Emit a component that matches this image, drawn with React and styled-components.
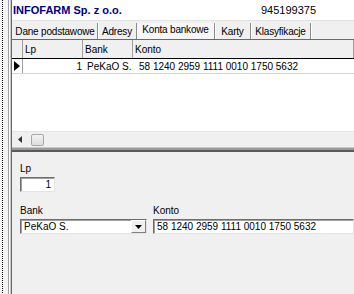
import styled, { createGlobalStyle } from 'styled-components';

const Global = createGlobalStyle`
    html, body { margin: 0; padding: 0; }
    body {
        background: #f0f0f0;
        font-family: "Liberation Sans", Arial, sans-serif;
        font-size: 10px;
        color: #000;
    }
`

const tabs = [
    { label: 'Dane podstawowe', width: 85 },
    { label: 'Adresy', width: 39 },
    { label: 'Konta bankowe', width: 78, active: true },
    { label: 'Karty', width: 36 },
    { label: 'Klasyfikacje', width: 60 },
]

export default function App() {
    return (
        <>
            <Global />
            <Window>
                <Gutter />
                <FrameEdge />
                <Main>
                    <Header>
                        <Title>INFOFARM Sp. z o.o.</Title>
                        <span>945199375</span>
                    </Header>
                    <TabStrip>
                        {tabs.map(t => (
                            <Tab key={t.label} $w={t.width} $active={t.active}>{t.label}</Tab>
                        ))}
                    </TabStrip>
                    <Grid>
                        <HeadRow>
                            <IndicatorCell />
                            <HeadCell $w={57}>Lp</HeadCell>
                            <HeadCell $w={47}>Bank</HeadCell>
                            <HeadCell $grow>Konto</HeadCell>
                        </HeadRow>
                        <DataRow>
                            <IndicatorCell>
                                <svg width="6" height="10" viewBox="0 0 6 10">
                                    <path d="M0 0 L6 5 L0 10 Z" fill="#000" />
                                </svg>
                            </IndicatorCell>
                            <Cell $w={57} $right>1</Cell>
                            <Cell $w={47}>PeKaO S.</Cell>
                            <Cell $grow>58 1240 2959 1111 0010 1750 5632</Cell>
                        </DataRow>
                        <GridFill />
                        <HScroll>
                            <svg width="4" height="7" viewBox="0 0 4 7">
                                <path d="M4 0 L0 3.5 L4 7 Z" fill="#333" />
                            </svg>
                            <Thumb />
                        </HScroll>
                    </Grid>
                    <Splitter />
                    <Panel>
                        <Field>
                            <Label>Lp</Label>
                            <Edit $w={35} $right>1</Edit>
                        </Field>
                        <FieldRow>
                            <Field>
                                <Label>Bank</Label>
                                <Combo>
                                    <ComboText>PeKaO S.</ComboText>
                                    <DropButton>
                                        <svg width="7" height="4" viewBox="0 0 7 4">
                                            <path d="M0 0 L7 0 L3.5 4 Z" fill="#000" />
                                        </svg>
                                    </DropButton>
                                </Combo>
                            </Field>
                            <Field $grow>
                                <Label>Konto</Label>
                                <Edit>58 1240 2959 1111 0010 1750 5632</Edit>
                            </Field>
                        </FieldRow>
                    </Panel>
                </Main>
            </Window>
        </>
    )
}

const Window = styled.div`
    display: flex;
    height: 294px;
    width: 354px;
    overflow: hidden;
`

const Gutter = styled.div`
    width: 8px;
    flex: none;
    background: #f4f4f4;
    background-image: linear-gradient(#000 50%, transparent 50%);
    background-size: 1px 2px;
    background-repeat: repeat-y;
    background-position: 2px 0;
`

const FrameEdge = styled.div`
    width: 1px;
    flex: none;
    border-left: 1px solid #a0a0a0;
    border-right: 1px solid #c8c8c8;
    background: #fff;
`

const Main = styled.div`
    flex: 1;
    min-width: 0;
    display: flex;
    flex-direction: column;
    border-left: 1px solid #696969;
`

const Header = styled.div`
    height: 20px;
    flex: none;
    background: #fff;
    border-bottom: 1px solid #e4e4e4;
    display: grid;
    grid-template-columns: 249px 1fr;
    align-items: center;
    font-size: 11px;
    white-space: nowrap;
`

const Title = styled.span`
    font-weight: bold;
    color: #000080;
    padding-left: 1px;
`

const TabStrip = styled.div`
    height: 18px;
    flex: none;
    display: flex;
    align-items: stretch;
    padding-left: 1px;
    background: #f0f0f0;
    white-space: nowrap;
`

const Tab = styled.div`
    width: ${p => p.$w}px;
    flex: none;
    display: flex;
    align-items: center;
    justify-content: center;
    box-sizing: border-box;
    margin-top: 2px;
    padding-bottom: ${p => (p.$active ? 4 : 0)}px;
    border-right: 1px solid #8c8c8c;
    box-shadow: 1px 0 0 #fff;
    letter-spacing: -0.2px;
    background: ${p => (p.$active ? '#f7f7f7' : 'transparent')};
`

const Grid = styled.div`
    height: 107px;
    flex: none;
    display: flex;
    flex-direction: column;
    background: #fff;
    border-top: 1px solid #696969;
`

const HeadRow = styled.div`
    height: 18px;
    flex: none;
    display: flex;
    background: #f0f0f0;
    border-bottom: 1px solid #000;
`

const IndicatorCell = styled.div`
    width: 10px;
    flex: none;
    display: flex;
    align-items: center;
    justify-content: center;
    border-right: 1px solid #a0a0a0;
`

const HeadCell = styled.div`
    ${p => (p.$grow ? 'flex: 1;' : `width: ${p.$w}px; flex: none;`)}
    display: flex;
    align-items: center;
    padding-left: 2px;
    border-right: 1px solid #a0a0a0;
    white-space: nowrap;
`

const DataRow = styled.div`
    height: 14px;
    flex: none;
    display: flex;
    border-bottom: 1px solid #d4d4d4;
`

const Cell = styled.div`
    ${p => (p.$grow ? 'flex: 1;' : `width: ${p.$w}px; flex: none;`)}
    display: flex;
    align-items: center;
    justify-content: ${p => (p.$right ? 'flex-end' : 'flex-start')};
    padding: 0 2px;
    box-sizing: content-box;
    white-space: nowrap;
    border-right: 1px solid transparent;
`

const GridFill = styled.div`
    flex: 1;
`

const HScroll = styled.div`
    height: 15px;
    flex: none;
    display: flex;
    align-items: center;
    gap: 9px;
    padding-left: 6px;
    background: #f0f0f0;
    border-top: 1px solid #e6e6e6;
`

const Thumb = styled.div`
    width: 13px;
    height: 12px;
    box-sizing: border-box;
    border: 1px solid #a8a8a8;
    border-radius: 2px;
    background: linear-gradient(#f2f2f2, #dedede);
`

const Splitter = styled.div`
    height: 2px;
    flex: none;
    border-top: 1px solid #c8c8c8;
    border-bottom: 2px solid #5a5a5a;
    background: #9a9a9a;
`

const Panel = styled.div`
    flex: 1;
    display: flex;
    flex-direction: column;
    gap: 13px;
    padding: 11px 0 0 8px;
    background: #f0f0f0;
`

const FieldRow = styled.div`
    display: flex;
    gap: 6px;
`

const Field = styled.div`
    display: flex;
    flex-direction: column;
    gap: 3px;
    ${p => p.$grow && 'flex: 1; min-width: 0;'}
`

const Label = styled.div`
    height: 11px;
    line-height: 11px;
    white-space: nowrap;
`

const sunken = `
    box-sizing: border-box;
    height: 15px;
    background: #fff;
    border: 1px solid;
    border-color: #6d6d6d #e3e3e3 #e3e3e3 #6d6d6d;
    box-shadow: inset 1px 1px 0 #a0a0a0;
`

const Edit = styled.div`
    ${sunken}
    width: ${p => (p.$w ? `${p.$w}px` : 'auto')};
    display: flex;
    align-items: center;
    justify-content: ${p => (p.$right ? 'flex-end' : 'flex-start')};
    padding: 0 3px;
    white-space: nowrap;
    overflow: hidden;
`

const Combo = styled.div`
    ${sunken}
    width: 127px;
    display: flex;
    align-items: center;
    padding-left: 3px;
`

const ComboText = styled.span`
    flex: 1;
    white-space: nowrap;
`

const DropButton = styled.div`
    width: 15px;
    height: 13px;
    box-sizing: border-box;
    display: flex;
    align-items: center;
    justify-content: center;
    background: #f0f0f0;
    border: 1px solid;
    border-color: #fff #808080 #808080 #fff;
`
